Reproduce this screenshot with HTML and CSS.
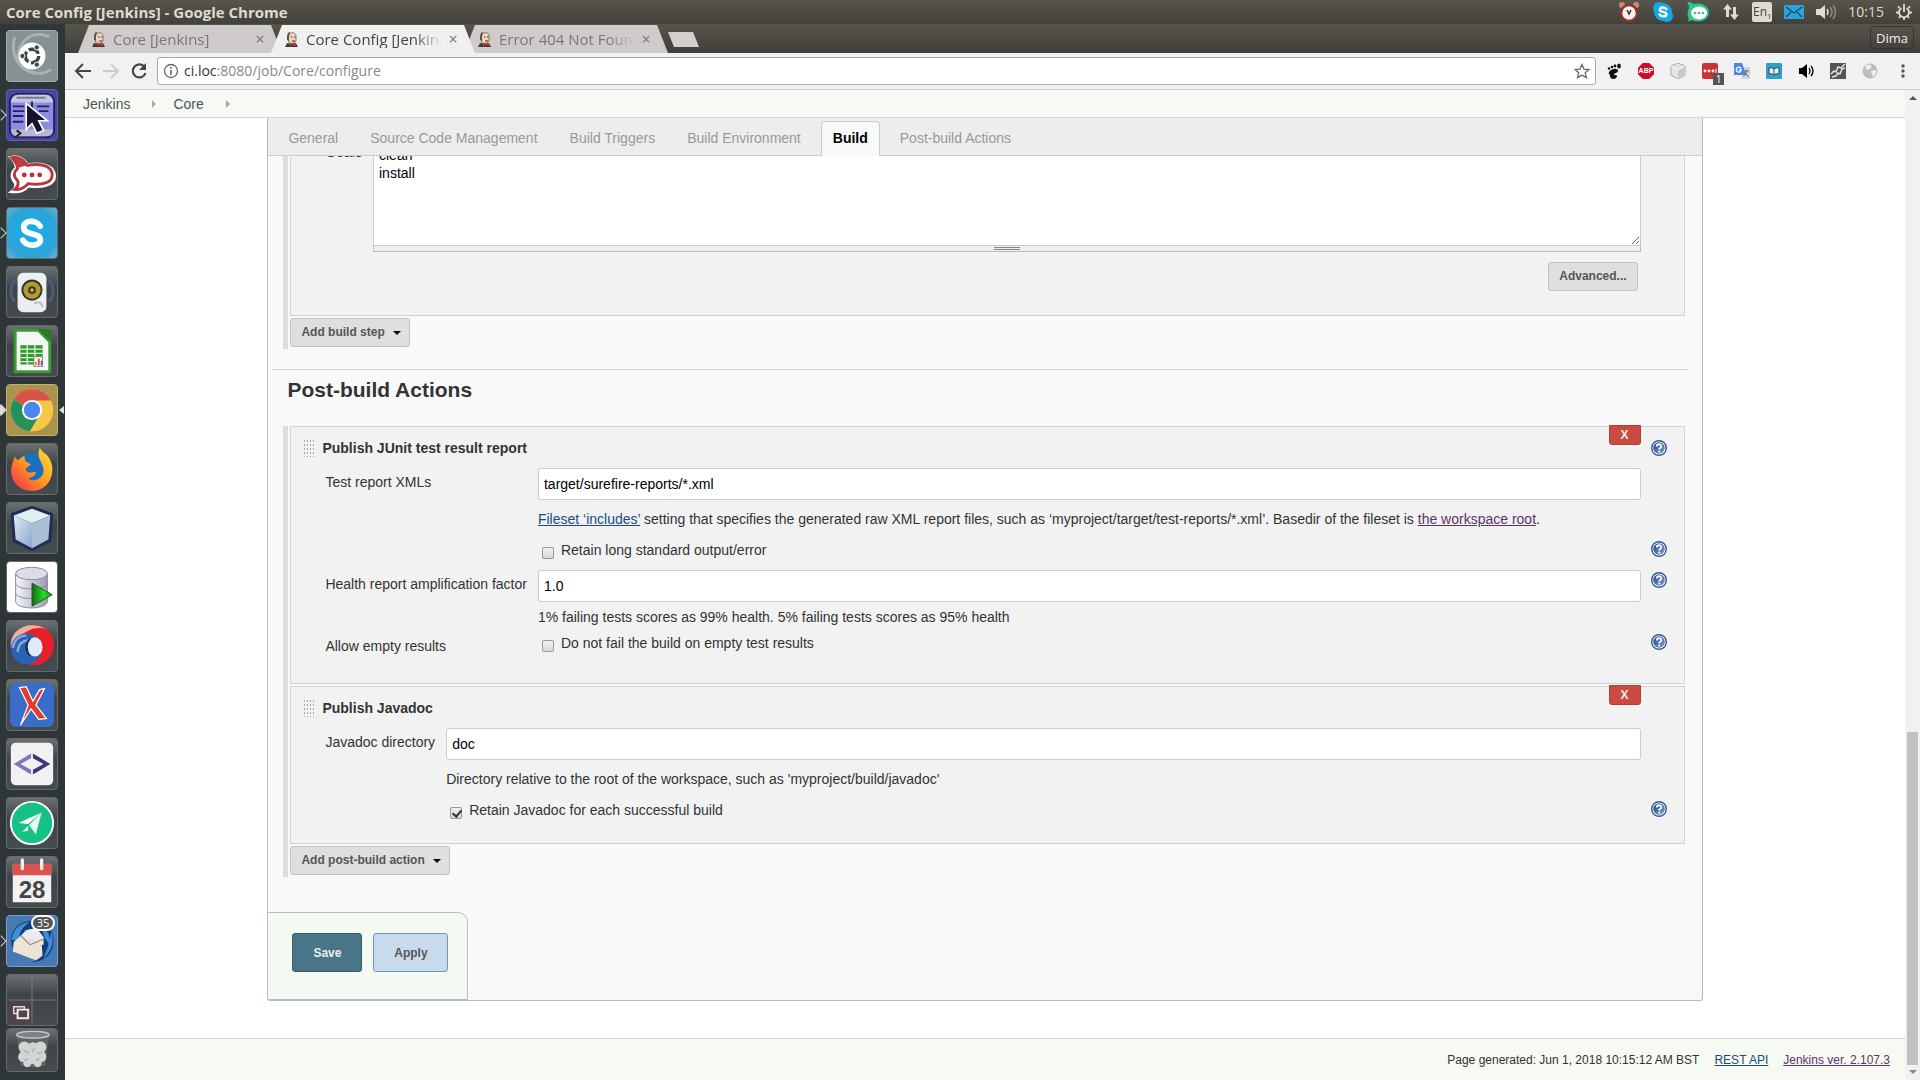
FILE: index.html
```html
<!DOCTYPE html>
<html lang="en">
<head>
<meta charset="utf-8">
<title>Core Config [Jenkins]</title>
<link rel="stylesheet" href="styles.css">
</head>
<body>
<svg class="defs" aria-hidden="true">
  <defs>
    <linearGradient id="help-blue" x1="0" y1="0" x2="1" y2="1"><stop offset="0" stop-color="#1f4480"/><stop offset="1" stop-color="#7ea2cc"/></linearGradient>
    <linearGradient id="cube-l" x1="0" y1="0" x2="1" y2="1"><stop offset="0" stop-color="#dfe9f5"/><stop offset="1" stop-color="#8ba6cf"/></linearGradient>
    <linearGradient id="fox" x1="1" y1="0" x2="0" y2="1"><stop offset="0" stop-color="#ffe23f"/><stop offset=".5" stop-color="#ff9a1c"/><stop offset="1" stop-color="#f5225a"/></linearGradient>
    <linearGradient id="disk" x1="0" x2="1"><stop offset="0" stop-color="#f6f6fa"/><stop offset="1" stop-color="#9c9cb4"/></linearGradient>
    <linearGradient id="play" x1="0" x2="1"><stop offset="0" stop-color="#17651a"/><stop offset=".6" stop-color="#22e022"/><stop offset="1" stop-color="#148a17"/></linearGradient>
  </defs>
  <symbol id="butler" viewBox="0 0 16 16">
    <path d="M4 6C4 1 12 0 12 5v5l-3 3-4-1z" fill="#f0d6b7" stroke="#555" stroke-width=".7"/>
    <path d="M3 6c0-3 1-5 3-5L5 6v4L3 9z" fill="#5b5249"/>
    <path d="M7 6h1.500M10 6h1.500M8 10h3" stroke="#333" stroke-width="1"/>
    <path d="M1 16l2-4 4 1 5-1 2 4z" fill="#3a3d44"/><path d="M6 12l6 0v3l-3-1-3 1z" fill="#c8352b"/>
  </symbol>
  <symbol id="help" viewBox="0 0 16 16">
    <circle cx="8" cy="8" r="7.300" fill="#fff" stroke="#315a94" stroke-width="1.400"/>
    <circle cx="8" cy="8" r="5.800" fill="url(#help-blue)"/>
    <path d="M5.800 6.400c0-2.900 4.600-2.800 4.600-.2C10.400 7.800 8.200 7.800 8.200 9.400" fill="none" stroke="#fff" stroke-width="1.800"/>
    <circle cx="8.200" cy="11.600" r="1.100" fill="#fff"/>
  </symbol>
</svg>

<header class="menubar">
  <span class="window-title">Core Config [Jenkins] - Google Chrome</span>
  <div class="indicators">
    <svg width="22" height="22" viewBox="0 0 22 22"><circle cx="4" cy="4" r="3" fill="#d08a72"/><circle cx="18" cy="4" r="3" fill="#d08a72"/><circle cx="11" cy="12" r="8" fill="#f6f1ee" stroke="#8a3723" stroke-width="2.500"/><path d="M9 9l2 4 2-4" fill="none" stroke="#333" stroke-width="1.500"/></svg>
    <svg width="22" height="22" viewBox="0 0 22 22"><circle cx="7" cy="7" r="6" fill="#14a8e6"/><circle cx="15" cy="15" r="6" fill="#14a8e6"/><circle cx="11" cy="11" r="9" fill="#14a8e6"/><path d="M14.500 8.300C13 5.500 7.500 6 7.800 8.800c.3 2.600 6.600 1.700 6.700 4.400.1 2.500-5.500 3-7 .2" fill="none" stroke="#fff" stroke-width="2.400" stroke-linecap="round"/></svg>
    <svg width="24" height="22" viewBox="0 0 24 22"><path d="M1 1c4 0 5 1 7 2 9-2 15 3 15 9s-9 11-17 7l-5 2c2-2 2-4 1-6-1-3 0-6 1-8 0-3-1-4-2-6z" fill="#2cc68a"/><ellipse cx="13" cy="12" rx="8" ry="6.500" fill="#fff"/><g fill="#2cc68a"><circle cx="9" cy="12" r="1.300"/><circle cx="13" cy="12" r="1.300"/><circle cx="17" cy="12" r="1.300"/></g></svg>
    <svg width="18" height="18" viewBox="0 0 18 18" fill="#dfdbd2"><path d="M5.500 1L10 6.500H7V14H4V6.500H1zM12.500 17L8 11.500h3V4h3v7.500h3z"/></svg>
    <span class="keyboard">En<sub>1</sub></span>
    <svg width="20" height="14" viewBox="0 0 20 14"><rect width="20" height="14" rx="1" fill="#2aa4de"/><path d="M2 2l8 6 8-6M2 12l5-5M18 12l-5-5" fill="none" stroke="#17455e" stroke-width="1.200"/></svg>
    <svg width="20" height="16" viewBox="0 0 20 16"><path d="M0 5h4l5-4v14l-5-4H0z" fill="#dfdbd2"/><path d="M11 5q2 3 0 6" fill="none" stroke="#dfdbd2" stroke-width="1.500"/><path d="M14 3q4 5 0 10M17 1q5 7 0 14" fill="none" stroke="#8d8b84" stroke-width="1.500"/></svg>
    <span class="clock">10:15</span>
    <svg width="16" height="18" viewBox="0 0 16 18" fill="none" stroke="#dfdbd2" stroke-width="1.800"><path d="M5.500 5a5 5 0 1 0 5 0M8 1v8"/><path d="M3.500 5L2 3.500M12.500 5L14 3.500M3 9.500H0M16 9.500h-3M4.500 13L3 15M11.500 13l1.500 2M8 14v3"/></svg>
  </div>
</header>

<div class="desktop">
  <nav class="launcher" aria-label="Launcher">
    <button class="tile ubuntu" aria-label="Search"><svg viewBox="0 0 52 52"><path d="M8 6c-8 30 20 46 38 34M44 6C20-4 8 20 12 32" fill="none" stroke="#a9b2b4" stroke-width="3"/><circle cx="26" cy="26" r="14" fill="#fff"/><circle cx="26" cy="26" r="7" fill="none" stroke="#3c4548" stroke-width="3.500" stroke-dasharray="12 2.660"/><g fill="#3c4548" stroke="#fff"><circle cx="16" cy="26" r="2.700"/><circle cx="31" cy="17" r="2.700"/><circle cx="31" cy="35" r="2.700"/></g></svg></button>
    <button class="tile files running" aria-label="Files"><svg viewBox="0 0 52 52"><rect x="3" y="4" width="46" height="45" rx="8" fill="#8d8ce4" stroke="#24205c" stroke-width="2"/><path d="M4 13q1-8 8-8h28q7 0 8 8z" fill="#c6c6dc"/><path d="M4 41h44q0 7-7 7H11q-7 0-7-7z" fill="#b9b9d6"/><path d="M10 8h30" stroke="#777792" stroke-width="2"/><path d="M6 17h12M6 22h12M6 27h11M6 33h11M31 17h13M33 22h10M26 12v8" stroke="#24205c" stroke-width="2"/><path d="M10 42l4 3-4 3" fill="none" stroke="#222" stroke-width="2"/><path d="M20 14v27l6-6 5 10 7-3-5-10h9z" fill="#15122e" stroke="#fff" stroke-width="1.700"/></svg></button>
    <button class="tile" aria-label="Rocket.Chat"><svg viewBox="0 0 52 52"><path d="M5 9q10-2 16 8c17-3 28 2 28 11S37 40 22 38q-6 7-16 6 5-4 3-9c-5-6-4-11 1-15 0-5-2-8-5-11z" fill="#fff" stroke="#fff" stroke-width="4"/><path d="M5 9q10-2 16 8c17-3 26 2 26 10S37 38 22 36q-6 7-14 6 5-4 3-9c-5-5-4-9 0-13 0-5-3-8-6-11z" fill="#fff" stroke="#b8353f" stroke-width="3"/><path d="M5 9q10-2 16 8l-11 3q0-6-5-11z" fill="#c23b43"/><g fill="#c02c38"><circle cx="18" cy="27" r="2.500"/><circle cx="26" cy="27" r="2.500"/><circle cx="34" cy="27" r="2.500"/></g></svg></button>
    <button class="tile skype running" aria-label="Skype"><svg viewBox="0 0 52 52"><path d="M34.500 19C31 12 16 12 17.500 21c1.200 8 17 4 17.200 12 .2 7-14 8-18.200.5" fill="none" stroke="#fff" stroke-width="6" stroke-linecap="round"/></svg></button>
    <button class="tile" aria-label="Audio player"><svg viewBox="0 0 52 52"><path d="M8 14q-8 12 0 22M44 14q8 12 0 22" stroke="#4b5c80" stroke-width="3" fill="none"/><rect x="11" y="6" width="30" height="41" rx="6" fill="#eceff1"/><circle cx="26" cy="24" r="11" fill="#343434"/><circle cx="26" cy="24" r="9" fill="#b59a2c"/><circle cx="26" cy="24" r="4" fill="#333"/><circle cx="26" cy="24" r="2" fill="#c9ae41"/><path d="M28 38q8-4 9 4" stroke="#b7bfc5" stroke-width="2" fill="none"/></svg></button>
    <button class="tile" aria-label="Calc"><svg viewBox="0 0 52 52"><path d="M7 3h28l11 11v35H7z" fill="#3c9b32"/><path d="M10 6h22l11 11v29H10z" fill="#f6f6f6"/><path d="M32 3h14v14z" fill="#287c20"/><rect x="14" y="20" width="23" height="20" fill="#2f9928"/><path d="M14 24h23M14 28.500h23M14 33h23M14 37h23M21 20v20M29 20v20" stroke="#e6f6e4" stroke-width="1.300"/><rect x="28" y="32" width="9" height="10" fill="#fff" stroke="#888"/><path d="M30 41v-4" stroke="#d92" stroke-width="2"/><path d="M33 41v-7" stroke="#d43" stroke-width="2"/><path d="M36 41v-5" stroke="#37b" stroke-width="2"/></svg></button>
    <button class="tile chrome running active" aria-label="Chrome"><svg viewBox="0 0 52 52"><circle cx="26" cy="26" r="22" fill="#f5c445"/><path d="M26 26L7 15a22 22 0 0 1 38.500 1z" fill="#d9534a"/><path d="M26 26L7 15a22 22 0 0 0 17 33l10.500-17z" fill="#24905a"/><path d="M26 16h19.500a22 22 0 0 1-21.500 32l10-17z" fill="#f7c846"/><circle cx="26" cy="26" r="10.500" fill="#fff"/><circle cx="26" cy="26" r="8.500" fill="#4c86ec"/></svg></button>
    <button class="tile" aria-label="Firefox"><svg viewBox="0 0 52 52"><circle cx="26" cy="26" r="17" fill="#1c6fbe"/><path d="M34 4q3 5 8 8c10 12 5 32-10 36-17 4-31-9-27-26l3-9 3 4 7-5 1 6 6 3-6 5c3 6 7 3 11 3-1 6-6 5-8 7 8 5 17-2 16-10-1-7-8-11-4-22z" fill="url(#fox)"/></svg></button>
    <button class="tile" aria-label="VirtualBox"><svg viewBox="0 0 52 52"><path d="M26 5l20 7-2 27-18 9-18-9-2-27z" fill="#1f2c55" stroke="#1f2c55" stroke-width="4" stroke-linejoin="round"/><path d="M26 6l19 7-19 8-19-8z" fill="#dff0f0"/><path d="M7 13l19 8v26L9 38z" fill="url(#cube-l)"/><path d="M45 13l-19 8v26l17-9z" fill="#a9bfd4"/></svg></button>
    <button class="tile white" aria-label="SQL Developer"><svg viewBox="0 0 52 52"><path d="M9 12v29c0 9 33 9 33 0V12z" fill="url(#disk)" stroke="#888898"/><ellipse cx="25.500" cy="12" rx="16.500" ry="6.500" fill="#dcdce8" stroke="#888898"/><path d="M9 22c0 8 33 8 33 0M9 32c0 8 33 8 33 0" fill="none" stroke="#888898"/><path d="M26 22l21 12-21 12z" fill="url(#play)" stroke="#155c17"/></svg></button>
    <button class="tile" aria-label="CD ripper"><svg viewBox="0 0 52 52"><circle cx="28" cy="25" r="21" fill="#e5202a"/><path d="M4 28C2 8 24-2 42 9 28 4 20 12 12 16z" fill="#eeb09f"/><circle cx="20" cy="29" r="16" fill="#2a62b4"/><path d="M6 28q2-12 14-13M11 32q1-11 11-12" stroke="#86a8da" stroke-width="2.500" fill="none"/><ellipse cx="29" cy="27" rx="8" ry="10" fill="#dcebf4"/><path d="M25 18q-7 9 0 19-6-2-6-10 0-7 6-9z" fill="#1b2d58"/></svg></button>
    <button class="tile" aria-label="XML editor"><svg viewBox="0 0 52 52"><rect x="3" y="3" width="46" height="46" rx="7" fill="#3a6cc9"/><path d="M13 8l7-1 7 15 7-12 5-1-9 17 11 14-8 1-8-11-11 17 8-21z" fill="#e03c2c" stroke="#fff" stroke-width="1.300"/></svg></button>
    <button class="tile" aria-label="Code editor"><svg viewBox="0 0 52 52"><rect x="4" y="4" width="44" height="44" rx="5" fill="#f1f1f3"/><path d="M25 15v5l-11 6 11 6v5L7 26z" fill="#7b78b8"/><path d="M27 15v5l11 6-11 6v5l18-11z" fill="#3b357e"/></svg></button>
    <button class="tile" aria-label="Messenger"><svg viewBox="0 0 52 52"><circle cx="26" cy="26" r="22" fill="#16c184" stroke="#fff" stroke-width="2"/><path d="M36 15L12 26l10 1z" fill="#fff"/><path d="M36 15L23 28l7 10z" fill="#e4fff4"/><path d="M22 29l-6 6 6-1z" fill="#fff"/></svg></button>
    <button class="tile" aria-label="Calendar"><svg viewBox="0 0 52 52"><path d="M6 8h40v39H6z" fill="#f2f2f2"/><path d="M6 7h40v12H6z" fill="#d9544f"/><path d="M16 3v9M36 3v9" stroke="#eee" stroke-width="3.500" stroke-linecap="round"/></svg><span class="day">28</span></button>
    <button class="tile mail running" aria-label="Thunderbird"><svg viewBox="0 0 52 52"><path d="M7 36C0 20 8 6 26 5q20-2 22 18c2 18-12 26-24 25q10-2 12-6z" fill="#123f7c"/><path d="M5 25Q6 9 24 6 10 16 14 26zM46 16q5 16-8 28l3-8q3-8 5-20zM36 12q10 4 8 18l-5-8z" fill="#3e8fd8"/><path d="M15 20q6-9 17-6l6 8v8H14z" fill="#e9edf2"/><path d="M7 27l8-7 21 8 1 13-7 5L6 37z" fill="#efe3d8"/><path d="M15 21l9 9 14-6" stroke="#9a9088" stroke-width="1.300" fill="none"/></svg><span class="badge">35</span></button>
    <button class="tile" aria-label="Workspaces"><svg viewBox="0 0 52 52"><path d="M2 27h24v23H2z" fill="#50414a"/><path d="M26 2v48M2 26h48" stroke="#777e82"/><path d="M7 33h11v7H7z" fill="none" stroke="#ddd" stroke-width="1.500"/><path d="M11 36h11v9H11z" fill="#55444e" stroke="#eee" stroke-width="2"/></svg></button>
    <button class="tile trash" aria-label="Trash"><svg viewBox="0 0 52 44"><path d="M10 6h34l-4 32q-13 5-26 0z" fill="#5f6465"/><g fill="#d3d5d5"><circle cx="18" cy="19" r="6"/><circle cx="27" cy="20" r="6"/><circle cx="35" cy="19" r="6"/><circle cx="17" cy="29" r="5.500"/><circle cx="26" cy="30" r="7"/><circle cx="35" cy="29" r="6"/><circle cx="21" cy="36" r="4"/><circle cx="32" cy="36" r="4"/></g><path d="M17 22l5 3M29 20l-3 4M37 24l-5 2M22 31l-4 2M30 33l4-2" stroke="#aeb2b2" stroke-width="1.500"/><ellipse cx="27" cy="6" rx="17" ry="3.500" fill="#7c8182" stroke="#c3c7c7" stroke-width="1.500"/></svg></button>
  </nav>

  <div class="browser">
    <div class="tabstrip">
      <div class="browser-tab"><svg class="favicon"><use href="#butler"/></svg><span class="tab-name">Core [Jenkins]</span><button class="close" aria-label="Close tab">×</button></div>
      <div class="browser-tab current"><svg class="favicon"><use href="#butler"/></svg><span class="tab-name">Core Config [Jenkins]</span><button class="close" aria-label="Close tab">×</button></div>
      <div class="browser-tab"><svg class="favicon"><use href="#butler"/></svg><span class="tab-name">Error 404 Not Found</span><button class="close" aria-label="Close tab">×</button></div>
      <button class="new-tab" aria-label="New tab"></button>
      <button class="profile">Dima</button>
    </div>

    <div class="toolbar">
      <button class="tool" aria-label="Back"><svg width="18" height="18" viewBox="0 0 18 18" fill="none" stroke="#444" stroke-width="2"><path d="M17 9H3M9 2L2 9l7 7"/></svg></button>
      <button class="tool" aria-label="Forward"><svg width="18" height="18" viewBox="0 0 18 18" fill="none" stroke="#ccc" stroke-width="2"><path d="M1 9h14M9 2l7 7-7 7"/></svg></button>
      <button class="tool" aria-label="Reload"><svg width="18" height="18" viewBox="0 0 18 18" fill="none" stroke="#444" stroke-width="2.200"><path d="M14.500 5A6.500 6.500 0 1 0 15.500 11"/><path d="M16 1v7H9z" fill="#444" stroke="none"/></svg></button>
      <div class="omnibox">
        <svg width="16" height="16" viewBox="0 0 16 16"><circle cx="8" cy="8" r="6.500" fill="none" stroke="#666" stroke-width="1.300"/><path d="M8 7v5M8 4v1.700" stroke="#666" stroke-width="1.600"/></svg>
        <span class="url"><b>ci.loc</b>:8080/job/Core/configure</span>
        <svg width="16" height="16" viewBox="0 0 16 16"><path d="M8 1.500l2 4.600 5 .4-3.800 3.300 1.200 4.900L8 12.100l-4.400 2.600 1.200-4.900L1 6.500l5-.4z" fill="none" stroke="#666" stroke-width="1.300"/></svg>
      </div>
      <div class="extensions">
        <svg viewBox="0 0 16 16"><path d="M3 9c3-4 9-4 9-1 0 2-4 2-4 3.500 0 1 3 0 3 1.500 0 4-7 4-7 0 0-2-2-2-1-4z" fill="#111"/><g fill="#111"><circle cx="3" cy="5.500" r="1.200"/><circle cx="6" cy="4" r="1.300"/><circle cx="9" cy="3" r="1.400"/><ellipse cx="13" cy="3" rx="1.800" ry="2.500"/></g></svg>
        <span class="abp">ABP</span>
        <svg viewBox="0 0 16 16"><path d="M8 0l7 3v9l-7 4-7-4V3z" fill="#e5e5e5" stroke="#aaa"/><path d="M8 7v9l7-4V3z" fill="#c9c9c9"/><path d="M1 3l7 4 7-4" fill="none" stroke="#fafafa"/></svg>
        <span class="pass"><svg viewBox="0 0 16 16"><rect width="16" height="16" rx="2" fill="#cb3235"/><g fill="#fff"><circle cx="3" cy="8" r="1.400"/><circle cx="7" cy="8" r="1.400"/><circle cx="11" cy="8" r="1.400"/><path d="M13.500 5.500h1v5h-1z"/></g></svg><span class="count">1</span></span>
        <svg viewBox="0 0 16 16"><path d="M6 4h10v12H8z" fill="#d0d4da"/><path d="M0 0h8l4 12H0z" fill="#4a86e4"/><path d="M7 5.500A2.500 2.500 0 1 0 7.200 7H5" fill="none" stroke="#fff" stroke-width="1.300"/><path d="M10 8h5M12.500 7v1q0 4-3 5M10 9l5 5" fill="none" stroke="#5d7284"/></svg>
        <svg viewBox="0 0 16 16"><rect width="16" height="16" rx="1" fill="#2fa0cc"/><path d="M3 5q3-1 5 1 2-2 5-1v6q-3-1-5 1-2-2-5-1z" fill="#f1f4ea" stroke="#244b5c"/><path d="M8 6v6" stroke="#244b5c"/></svg>
        <svg viewBox="0 0 16 16"><path d="M1 5h3l5-4v14l-5-4H1z" fill="#000"/><path d="M11 5q2 3 0 6M13 3q4 5 0 10" fill="none" stroke="#000" stroke-width="1.300"/></svg>
        <svg viewBox="0 0 16 16"><path d="M0 0h16v16H0z" fill="#555"/><path d="M1 11l3-3 2 1 2-5 3 1 4-4M2 14l4-1 2-3 2 1 2-5 3-1" stroke="#e2e2e2" stroke-width="1.500" fill="none"/></svg>
        <svg viewBox="0 0 16 16"><circle cx="8" cy="8" r="7.500" fill="#bdbdbd"/><path d="M3 3q4-3 7 0L8 6 5 7zM9 8l5-1q1 4-3 7z" fill="#eee"/></svg>
        <svg viewBox="0 0 16 16" fill="#555"><circle cx="9" cy="3" r="1.700"/><circle cx="9" cy="8" r="1.700"/><circle cx="9" cy="13" r="1.700"/></svg>
      </div>
    </div>

    <div class="viewport">
      <main class="page">
        <nav class="breadcrumbs" aria-label="Breadcrumbs"><a href="#">Jenkins</a><i class="chevron"></i><a href="#">Core</a><i class="chevron"></i></nav>

        <form class="panel">
          <nav class="section-tabs" aria-label="Sections">
            <a href="#">General</a><a href="#">Source Code Management</a><a href="#">Build Triggers</a><a href="#">Build Environment</a><a href="#" class="selected">Build</a><a href="#">Post-build Actions</a>
          </nav>

          <section class="steps scrolled">
            <div class="step build">
              <div class="fields">
                <label class="label" for="goals">Goals</label>
                <div class="field">
                  <textarea id="goals">clean
install</textarea>
                  <div class="grip"></div>
                  <div class="actions"><button type="button" class="btn">Advanced...</button></div>
                </div>
              </div>
            </div>
            <button type="button" class="btn menu">Add build step<i class="caret"></i></button>
          </section>

          <hr>
          <h2>Post-build Actions</h2>

          <section class="steps">
            <div class="step">
              <button type="button" class="remove" aria-label="Remove step">X</button>
              <div class="step-head"><i class="handle"></i><b>Publish JUnit test result report</b><button type="button" class="help" aria-label="Help"><svg><use href="#help"/></svg></button></div>
              <div class="fields">
                <label class="label" for="xmls">Test report XMLs</label>
                <input class="field" id="xmls" type="text" value="target/surefire-reports/*.xml">
                <p class="field note"><a href="#">Fileset ‘includes’</a> setting that specifies the generated raw XML report files, such as ‘myproject/target/test-reports/*.xml’. Basedir of the fileset is <a href="#" class="visited">the workspace root</a>.</p>
                <label class="field check"><input type="checkbox">Retain long standard output/error</label>
                <button type="button" class="help beside-check" aria-label="Help"><svg><use href="#help"/></svg></button>
                <label class="label" for="factor">Health report amplification factor</label>
                <input class="field" id="factor" type="text" value="1.0">
                <button type="button" class="help" aria-label="Help"><svg><use href="#help"/></svg></button>
                <p class="field hint">1% failing tests scores as 99% health. 5% failing tests scores as 95% health</p>
                <span class="label last">Allow empty results</span>
                <label class="field check last"><input type="checkbox">Do not fail the build on empty test results</label>
                <button type="button" class="help last" aria-label="Help"><svg><use href="#help"/></svg></button>
              </div>
            </div>
            <div class="step">
              <button type="button" class="remove" aria-label="Remove step">X</button>
              <div class="step-head"><i class="handle"></i><b>Publish Javadoc</b></div>
              <div class="fields">
                <label class="label" for="javadoc">Javadoc directory</label>
                <input class="field" id="javadoc" type="text" value="doc">
                <p class="field note">Directory relative to the root of the workspace, such as 'myproject/build/javadoc'</p>
                <label class="field check"><input type="checkbox" checked>Retain Javadoc for each successful build</label>
                <button type="button" class="help beside-check" aria-label="Help"><svg><use href="#help"/></svg></button>
              </div>
            </div>
            <button type="button" class="btn menu">Add post-build action<i class="caret"></i></button>
          </section>

          <div class="submit-bar"><button type="button" class="save">Save</button><button type="button" class="apply">Apply</button></div>
        </form>

        <footer class="page-footer"><span>Page generated: Jun 1, 2018 10:15:12 AM BST</span><a href="#">REST API</a><a href="#" class="visited">Jenkins ver. 2.107.3</a></footer>
      </main>
      <div class="scrollbar"><i class="up"></i><i class="thumb"></i><i class="down"></i></div>
    </div>
  </div>
</div>
</body>
</html>
```
FILE: styles.css
```css
* { box-sizing: border-box; }
body { margin: 0; height: 100vh; display: flex; flex-direction: column; overflow: hidden; background: #fff; color: #333; font: 14px/18px "Liberation Sans", Arial, sans-serif; }
button { font: inherit; padding: 0; border: 0; background: none; }
p { margin: 0; }
.defs { position: absolute; width: 0; height: 0; }

/* Desktop top bar */
.menubar { flex: none; height: 24px; padding: 0 8px 0 6px; display: flex; align-items: center; justify-content: space-between; background: linear-gradient(#57554b, #42403b); color: #dfdbd2; font-family: "Open Sans", "Noto Sans", sans-serif; }
.window-title { font-size: 15px; font-weight: 700; }
.indicators { display: flex; align-items: center; gap: 12px; }
.keyboard { width: 20px; height: 20px; border-radius: 2px; background: #dfdbd2; color: #45433e; font-size: 12px; line-height: 20px; text-align: center; white-space: nowrap; }
.keyboard sub { font-size: 8px; line-height: 8px; }
.clock { font-size: 14px; }

.desktop { flex: 1; min-height: 0; display: flex; }

/* Launcher */
.launcher { flex: none; width: 65px; padding: 6px 0 0 6px; display: flex; flex-direction: column; gap: 7px; background: #2f3638; }
.tile { position: relative; flex: none; width: 52px; height: 52px; border-radius: 4px; border: 1px solid #676c6e; background: linear-gradient(#6c7072, #3e4447 40%, #454b4e); }
.tile svg { display: block; width: 50px; height: 50px; }
.ubuntu { background: #879194; border-color: #a2abad; }
.files { background: #4a449e; border-color: #6560bb; }
.skype { background: radial-gradient(#12b0f2, #2da3d6 70%, #6fb3cf); }
.chrome { background: #a8934f; border-color: #c3b06c; }
.white { background: #fff; }
.mail { background: #4779b4; border-color: #7ba0cc; }
.trash { height: 44px; margin-top: -5px; }
.trash svg { height: 42px; }
.running::before { content: ""; position: absolute; left: -10px; top: 21px; width: 7px; height: 7px; border: 1px solid #ccc; border-width: 1px 1px 0 0; transform: rotate(45deg); }
.active::before { background: #ddd; }
.active::after { content: ""; position: absolute; right: -7px; top: 21px; border: 4px solid transparent; border-right: 5px solid #ddd; border-left: 0; }
.day { position: absolute; left: 0; right: 0; top: 21px; color: #444; font: bold 24px/24px "Liberation Sans", sans-serif; text-align: center; }
.badge { position: absolute; right: 2px; top: -1px; width: 24px; height: 16px; border: 2px solid #fff; border-radius: 8px; background: #555; color: #fff; font: 11px/12px "Open Sans", sans-serif; text-align: center; }

/* Browser chrome */
.browser { flex: 1; min-width: 0; display: flex; flex-direction: column; }
.tabstrip { flex: none; height: 29px; padding: 1px 6px 0 13px; display: flex; background: linear-gradient(#57554b, #403e3a); font-family: "Open Sans", "Noto Sans", sans-serif; }
.browser-tab { width: 204px; height: 28px; margin-right: -11px; padding: 0 17px 0 13px; display: flex; align-items: center; gap: 6px; background: #cfcbca; color: #777; font-size: 15px; clip-path: polygon(0 100%, 11px 0, calc(100% - 11px) 0, 100% 100%); }
.current { position: relative; z-index: 1; background: #f2f0ef; color: #444; }
.favicon { flex: none; width: 16px; height: 16px; }
.tab-name { flex: 1; overflow: hidden; white-space: nowrap; -webkit-mask-image: linear-gradient(90deg, #000 80%, transparent); mask-image: linear-gradient(90deg, #000 80%, transparent); }
.close { width: 10px; color: #777; font-size: 16px; line-height: 16px; }
.new-tab { width: 31px; height: 15px; margin: 7px 0 0 11px; background: #d2cfcc; clip-path: polygon(0 0, 25px 0, 100% 100%, 6px 100%); }
.profile { width: 44px; height: 23px; margin: 1px 0 0 auto; border: 1px solid #35332f; border-radius: 4px; color: #f1efeb; font-size: 13px; line-height: 20px; }
.toolbar { flex: none; height: 37px; padding: 0 10px 0 9px; display: flex; align-items: center; background: #f2f0f0; border-bottom: 1px solid #ccc; }
.tool { width: 18px; height: 18px; margin-right: 10px; }
.tool svg { display: block; }
.omnibox { flex: 1; height: 28px; margin: 0 10px 0 -1px; padding: 0 5px; display: flex; align-items: center; gap: 5px; border: 1px solid #aaa; border-radius: 3px; background: #fff; }
.url { flex: 1; color: #888; font-family: "Open Sans", "Noto Sans", sans-serif; }
.url b { color: #333; font-weight: 400; }
.extensions { display: flex; align-items: center; gap: 16px; }
.extensions svg { display: block; flex: none; width: 16px; height: 16px; }
.abp { width: 16px; height: 16px; background: #c70d2c; color: #fff; font: bold 7px/16px "Liberation Sans", sans-serif; text-align: center; clip-path: polygon(30% 0, 70% 0, 100% 30%, 100% 70%, 70% 100%, 30% 100%, 0 70%, 0 30%); }
.pass { position: relative; }
.count { position: absolute; left: 11px; top: 10px; width: 11px; height: 12px; background: #555; color: #fff; font: 10px/12px "Open Sans", sans-serif; text-align: center; }

.viewport { flex: 1; min-height: 0; display: flex; }
.page { flex: 1; min-width: 0; display: flex; flex-direction: column; }
.scrollbar { width: 15px; padding: 6px 2px; display: flex; flex-direction: column; align-items: center; background: #f1f1f1; }
.up { border: 4px solid transparent; border-top: 0; border-bottom: 4px solid #555; }
.thumb { width: 11px; height: 34%; margin: auto 0 5px; background: #c1c1c1; }
.down { border: 4px solid transparent; border-bottom: 0; border-top: 4px solid #888; }

/* Jenkins page */
a { color: #204a87; }
a.visited { color: #5c3566; }
.breadcrumbs { flex: none; height: 28px; padding-left: 18px; display: flex; align-items: center; border-bottom: 1px solid #d3d7cf; background: #f6faf2; }
.breadcrumbs a { color: #4d545d; text-decoration: none; }
.chevron { margin: 0 17px 0 22px; border: 4px solid transparent; border-left: 4px solid #aaa; border-right: 0; }
.panel { flex: none; width: 78%; margin: 0 auto; border: 1px solid #bbb; border-top: 0; border-radius: 0 0 3px 3px; background: #f9f9f9; }
.section-tabs { position: relative; z-index: 1; height: 38px; padding: 3px 0 0 8px; display: flex; gap: 8px; border-bottom: 1px solid #ccc; background: #ededed; }
.section-tabs a { height: 35px; padding: 0 11px; border: 1px solid transparent; border-bottom: 0; border-radius: 4px 4px 0 0; color: #999; line-height: 33px; text-decoration: none; }
.section-tabs .selected { border-color: #ccc; background: #f9f9f9; color: #000; font-weight: bold; }
.steps { margin: 0 17px 0 15px; padding: 0 0 2px 2px; border-left: 5px solid #ddd; }
.step { position: relative; margin-bottom: 2px; padding-bottom: 24px; border: 1px solid #d3d3d3; background: #f2f2f2; }
.scrolled { margin-top: -18px; }
.build { border-top: 0; }
.step-head { padding: 12px 17px 11px 12px; display: flex; align-items: center; }
.step-head .help { margin: 0 0 0 auto; }
.handle { width: 11px; height: 18px; margin-right: 8px; background: radial-gradient(circle, #aaa 1px, transparent 1px) 0 0 / 3px 4px; }
.fields { padding: 0 17px 0 34px; display: grid; grid-template-columns: auto 1fr 16px; column-gap: 10px; align-items: start; }
.label { grid-column: 1; margin-top: 5px; padding-right: 1px; }
.field { grid-column: 2; }
.fields .help { grid-column: 3; }
.help { width: 16px; height: 16px; margin-top: 2px; }
.help svg { display: block; width: 16px; height: 16px; }
input[type=text] { width: 100%; height: 32px; padding: 0 5px; border: 1px solid #ccc; border-radius: 3px; background: #fff; color: #000; font: inherit; }
textarea { display: block; width: 100%; height: 108px; padding: 7px 5px; border: 1px solid #ccc; background: #fff; color: #000; font: inherit; resize: vertical; }
.grip { height: 6px; border: 1px solid #bbb; border-top: 0; background: linear-gradient(#888, #888) center 1px / 26px 1px no-repeat, linear-gradient(#888, #888) center 3px / 26px 1px no-repeat, #eee; }
.actions { padding: 10px 3px 0 0; text-align: right; }
.note { margin-top: 10px; }
.hint { margin-top: 6px; }
.check { height: 18px; margin: 13px 0 11px; display: flex; }
.beside-check { margin-top: 13px; }
.last { margin: 8px 0 0; }
.label.last { margin: 11px 0 4px; }
.step:last-of-type .check { margin-bottom: 0; }
input[type=checkbox] { flex: none; appearance: none; width: 12px; height: 12px; margin: 6px 7px 0 4px; border: 1px solid #999; border-radius: 2px; background: linear-gradient(#f0f0f0, #d8d8d8); }
input[type=checkbox]:checked::before { content: ""; display: block; width: 4px; height: 7px; margin: 0 0 0 3px; border: solid #333; border-width: 0 2px 2px 0; transform: rotate(40deg); }
.btn { height: 29px; padding: 0 10px; border: 1px solid #c3c3c3; border-radius: 3px; background: #dfdfdf; color: #555; font-size: 12px; font-weight: bold; line-height: 27px; vertical-align: top; }
.menu { padding-right: 8px; }
.caret { display: inline-block; margin-left: 8px; vertical-align: middle; border: 4px solid transparent; border-top: 4px solid #000; border-bottom: 0; }
.remove { position: absolute; right: 43px; top: -2px; width: 32px; height: 20px; border: 1px solid #a8403c; border-radius: 0 0 3px 3px; background: #cc4b40; color: #eee; font-size: 12px; font-weight: bold; }
hr { height: 1px; margin: 20px 15px 10px 5px; border: 0; background: #d3d3d3; }
h2 { margin: 0 19px 26px; font-size: 21px; line-height: 20px; }
.submit-bar { width: 200px; height: 88px; margin-top: 35px; padding: 20px 19px 0 24px; display: flex; gap: 11px; border: 1px solid #adc6bd; border-left: 0; border-radius: 0 10px 0 0; background: #f4f9f1; }
.save, .apply { flex: none; height: 39px; border: 1px solid #355f6c; border-radius: 3px; background: #487587; color: #eee; font-size: 12px; font-weight: bold; }
.save { width: 70px; }
.apply { width: 75px; border-color: #7297bb; background: #c8dbed; color: #555; }
.page-footer { flex: 1; margin-top: 37px; padding: 12px 15px 0; display: flex; justify-content: flex-end; gap: 15px; border-top: 1px solid #d3d7cf; background: #f6faf2; font-size: 12px; }
```
